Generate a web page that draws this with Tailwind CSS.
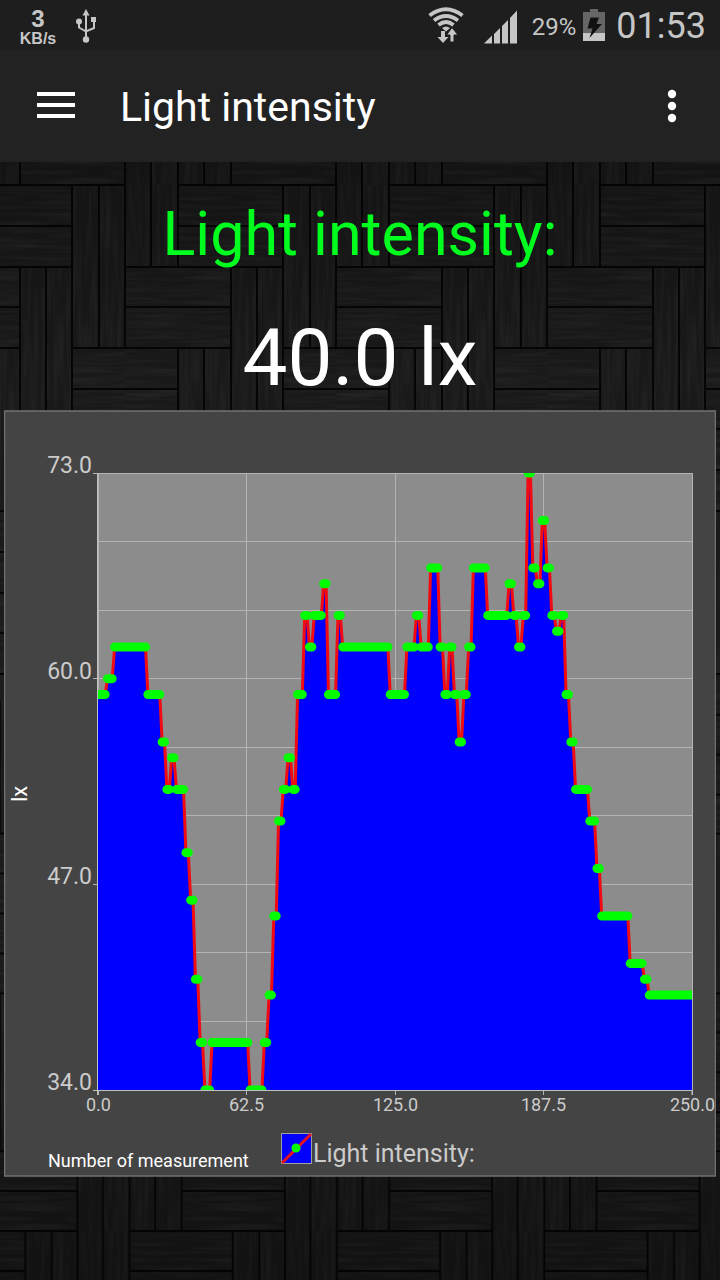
<!DOCTYPE html>
<html lang="en">
  <head>
    <meta charset="UTF-8" />
    <meta name="viewport" content="width=device-width, initial-scale=1.0" />
    <title>Light intensity</title>
    <script src="https://cdn.jsdelivr.net/npm/@tailwindcss/browser@4"></script>
  </head>
  <body class="bg-[#181818] font-[Roboto,sans-serif] text-white">
    <div class="relative isolate flex min-h-screen flex-col overflow-hidden">
      <!-- Woven wood background -->
      <svg class="absolute inset-0 -z-10 h-full w-full" aria-hidden="true">
        <defs>
          <filter id="grainH" x="0" y="0" width="100%" height="100%" color-interpolation-filters="sRGB">
            <feTurbulence type="fractalNoise" baseFrequency="0.015 0.25" numOctaves="3" seed="4" />
            <feColorMatrix values="0 0 0 0 1  0 0 0 0 1  0 0 0 0 1  0.11 0 0 0 -0.045" />
            <feComposite in2="SourceGraphic" operator="in" />
          </filter>
          <filter id="grainV" x="0" y="0" width="100%" height="100%" color-interpolation-filters="sRGB">
            <feTurbulence type="fractalNoise" baseFrequency="0.25 0.015" numOctaves="3" seed="9" />
            <feColorMatrix values="0 0 0 0 1  0 0 0 0 1  0 0 0 0 1  0.11 0 0 0 -0.045" />
            <feComposite in2="SourceGraphic" operator="in" />
          </filter>
          <pattern id="weave" width="211" height="326" patternUnits="userSpaceOnUse" patternTransform="translate(-86 185)">
            <rect width="211" height="326" fill="#191919" />
            <path filter="url(#grainH)" d="M53 0H158V82H53zM0 82H106V163H0zM0 163H53V244H0zM158 163H211V244H158zM106 244H211V326H106z" />
            <path filter="url(#grainV)" d="M158 0H211V163H158zM106 82H158V244H106zM53 163H106V326H53zM0 244H53V326H0zM0 0H53V82H0z" />
            <path
              fill="none"
              stroke="#050505"
              stroke-width="2"
              d="M53 0H211M53 41H158M0 82H158M0 122H106M0 163H106M158 163H211M0 204H53M158 204H211M0 244H53M106 244H211M106 285H211M53 326H211
                 M158 0V244M185 0V163M211 0V163M0 0V163M106 82V326M132 82V244M53 163V326M79 163V326M0 244V326M211 244V326M26 244V326M26 0V82M53 0V82"
            />
          </pattern>
          <pattern id="weaveLow" href="#weave" patternTransform="translate(-130 1231) scale(.983 .974)" />
          <linearGradient id="shade" x1="0" y1="0" x2="0" y2="1">
            <stop offset="0" stop-color="#000" stop-opacity=".4" />
            <stop offset=".3" stop-color="#000" stop-opacity="0" />
            <stop offset=".75" stop-color="#000" stop-opacity="0" />
            <stop offset="1" stop-color="#000" stop-opacity=".3" />
          </linearGradient>
        </defs>
        <rect width="100%" height="100%" fill="url(#weave)" />
        <rect y="700" width="100%" height="100%" fill="url(#weaveLow)" />
        <rect width="100%" height="100%" fill="url(#shade)" />
      </svg>

      <!-- Status bar -->
      <div class="flex h-[50px] items-center bg-[#1e1e1e] pr-3.5 pl-5 text-[#c6c6c6]">
        <div class="flex w-9 flex-col items-center pt-1 font-['Liberation_Sans',sans-serif] font-bold">
          <span class="text-2xl leading-6">3</span>
          <span class="text-base leading-4">KB/s</span>
        </div>
        <svg class="ml-5 h-9 w-5" viewBox="0 0 20 36" fill="none" aria-label="USB">
          <path d="M10 7V30M3 13V20.500L10 24.500L18 21V12" stroke="currentColor" stroke-width="2" />
          <path d="M10 2L6.500 8.500H13.500Z" fill="currentColor" />
          <circle cx="3" cy="14.500" r="3" fill="currentColor" />
          <rect x="15" y="10" width="5" height="5" fill="currentColor" />
          <circle cx="10" cy="32.500" r="3.200" fill="currentColor" />
        </svg>

        <div class="ml-auto flex items-center">
          <svg class="h-9 w-9" viewBox="0 0 36 36" fill="none" aria-label="Wi-Fi">
            <g stroke="currentColor" stroke-width="3.800">
              <path d="M1.500 8.500Q18 -4 34.500 8.500" />
              <path d="M6 13.500Q18 4.500 30 13.500" />
              <path d="M10.500 18Q18 12 25.500 18" />
            </g>
            <path d="M14 21Q18 18 22 21L18 24.500Z" fill="currentColor" />
            <path d="M13 24H17V30H20.500L15 36L9.500 30H13Z" fill="currentColor" />
            <path d="M22 35H26V28H30L24 20.500L18.500 28H22Z" fill="currentColor" stroke="#1e1e1e" stroke-width="1" />
          </svg>
          <svg class="mt-1 ml-5 h-[34px] w-[34px]" viewBox="0 0 34 34" fill="currentColor" aria-label="Signal">
            <path d="M0 33.500L8 25.500V33.500ZM10 24L16 18V33.500H10ZM18 16L24 10V33.500H18ZM26 8L33 .5V33.500H26Z" />
          </svg>
          <span class="ml-3.5 pt-1 text-2xl">29%</span>
          <svg class="ml-1.5 h-8 w-6" viewBox="0 0 24 32" aria-label="Battery charging">
            <path d="M8 0H16V3H23V24H1V3H8Z" fill="#666" />
            <rect x="1" y="24" width="22" height="8" fill="currentColor" />
            <path d="M8.500 8.500H17L14.500 15H20L7.500 29L10.500 19.500H5.500Z" fill="#111" />
          </svg>
          <span class="ml-2.5 pt-0.5 text-4xl">01:53</span>
        </div>
      </div>

      <!-- App bar -->
      <header class="flex h-28 items-center bg-[#222] pr-9 pl-9">
        <button type="button" aria-label="Open menu" class="mr-11 flex h-12 w-10 items-center">
          <svg class="h-7 w-10" viewBox="0 0 40 28" fill="white">
            <path d="M1 0H39V4H1ZM1 11H39V15H1ZM1 22H39V26H1Z" />
          </svg>
        </button>
        <h1 class="pt-1 text-[41px]">Light intensity</h1>
        <button type="button" aria-label="More options" class="ml-auto h-12 w-6">
          <svg class="mx-auto h-9 w-3" viewBox="0 0 12 36" fill="white">
            <circle cx="6" cy="6" r="4.200" />
            <circle cx="6" cy="18" r="4.200" />
            <circle cx="6" cy="30" r="4.200" />
          </svg>
        </button>
      </header>

      <main class="flex flex-col px-1 pt-8">
        <h2 class="text-center text-[61px] leading-20 text-[#00ff1e]">Light intensity:</h2>
        <p class="mt-[34px] mb-0.5 text-center text-[80px] leading-[100px]">40.0 lx</p>

        <svg id="chart" class="block w-full" viewBox="4 410 712 767" role="img" aria-label="Light intensity chart">
          <defs>
            <clipPath id="plot"><rect x="98" y="473" width="594" height="617" /></clipPath>
          </defs>
          <rect x="4.500" y="411" width="711" height="765" fill="#444" stroke="#717171" stroke-width="1.500" />
          <rect x="98" y="473" width="594" height="617" fill="#8c8c8c" />
          <g id="grid" stroke="#b4b4b4" stroke-width="1"></g>
          <g clip-path="url(#plot)">
            <path id="area" fill="#00f" />
            <path id="line" fill="none" stroke="#f20a12" stroke-width="3" />
            <path id="dots" fill="none" stroke="#0f0" stroke-width="9" stroke-linecap="round" />
          </g>
          <path d="M97.500 473V1095M93 1090.500H692V1095" fill="none" stroke="#c0c0c0" />
          <g id="yLabels" fill="#cbcbcb" font-size="23" text-anchor="end"></g>
          <g id="xLabels" fill="#cbcbcb" font-size="18" text-anchor="middle"></g>
          <text transform="translate(27 802) rotate(-90)" fill="#fff" font-size="22">lx</text>
          <text x="48" y="1167" fill="#fff" font-size="18">Number of measurement</text>
          <rect x="281.500" y="1133.500" width="30" height="30" fill="#00f" stroke="#a0a0a0" />
          <path d="M282 1163L311 1134" stroke="#e8101c" stroke-width="3" />
          <circle cx="296" cy="1148" r="4.500" fill="#0f0" />
          <text x="313" y="1162" fill="#cbcbcb" font-size="25">Light intensity:</text>
        </svg>
      </main>
    </div>

    <script>
      // [first sample, lux]; a level holds until the next entry
      const levels = [
        [0, 59], [4, 60], [7, 62], [21, 59], [27, 56], [29, 53], [31, 55], [33, 53],
        [37, 49], [39, 46], [41, 41], [43, 37], [45, 34], [48, 37], [64, 34], [70, 37],
        [72, 40], [74, 45], [76, 51], [78, 53], [80, 55], [82, 53], [84, 59], [87, 64],
        [89, 62], [91, 64], [95, 66], [97, 59], [101, 64], [103, 62], [123, 59], [130, 62],
        [134, 64], [136, 62], [140, 67], [144, 62], [146, 59], [148, 62], [150, 59], [152, 56],
        [154, 59], [156, 62], [158, 67], [164, 64], [173, 66], [175, 64], [177, 62], [179, 64],
        [181, 73], [183, 67], [185, 66], [187, 70], [189, 67], [191, 64], [193, 63], [195, 64],
        [197, 59], [199, 56], [201, 53], [207, 51], [210, 48], [212, 45], [224, 42], [230, 41],
        [232, 40],
      ];

      const x = (n) => 98 + (n / 250) * 594;
      const y = (lux) => 1090 - ((lux - 34) / 39) * 617;

      let line = "";
      let dots = "";
      levels.forEach(([start, lux], i) => {
        const end = i + 1 < levels.length ? levels[i + 1][0] - 1 : 250;
        line += `${i ? "L" : "M"}${x(start)} ${y(lux)}L${x(end)} ${y(lux)}`;
        dots += `M${x(start)} ${y(lux)}L${x(end)} ${y(lux)}`;
      });
      document.getElementById("line").setAttribute("d", line);
      document.getElementById("dots").setAttribute("d", dots);
      document.getElementById("area").setAttribute("d", `${line}L692 1090L98 1090Z`);

      let grid = "";
      for (let i = 0; i <= 9; i++) {
        const gy = Math.floor(473 + (i * 617) / 9) + 0.5;
        grid += `<path d="M${i % 3 ? 98 : 93} ${gy}H692" />`;
      }
      let xLabels = "";
      for (let i = 0; i <= 4; i++) {
        const gx = Math.floor(x(i * 62.5)) + 0.5;
        grid += `<path d="M${gx} 473V1095" />`;
        xLabels += `<text x="${gx}" y="1111">${(i * 62.5).toFixed(1)}</text>`;
      }
      let yLabels = "";
      [73, 60, 47, 34].forEach((lux) => {
        yLabels += `<text x="92" y="${Math.round(y(lux))}">${lux.toFixed(1)}</text>`;
      });
      document.getElementById("grid").innerHTML = grid;
      document.getElementById("xLabels").innerHTML = xLabels;
      document.getElementById("yLabels").innerHTML = yLabels;
    </script>
  </body>
</html>
